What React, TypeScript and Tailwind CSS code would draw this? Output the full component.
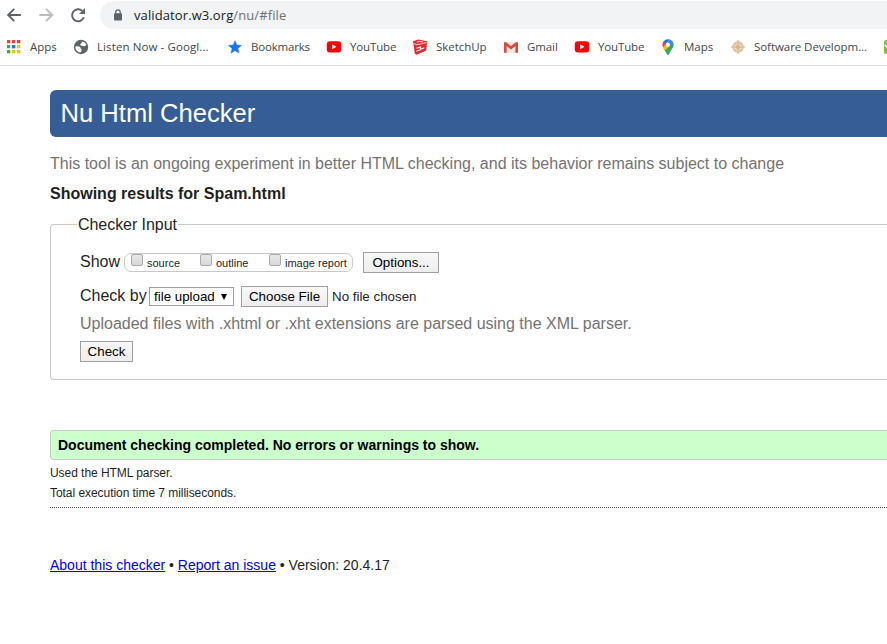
import type { ReactNode } from 'react';

const sans = "font-['Liberation_Sans',Arial,sans-serif]";
const ui = "font-['Open_Sans','Noto_Sans',sans-serif]";

function Icon({ children }: { children: ReactNode }) {
  return <svg viewBox="0 0 16 16" className="h-4 w-4 shrink-0">{children}</svg>;
}

const youtube = (
  <Icon>
    <rect x="0.8" y="2.2" width="14.4" height="11.2" rx="3" fill="#f00" />
    <path d="M6.2 5.3v5l4.2-2.5z" fill="#fff" />
  </Icon>
);

const apps = (
  <Icon>
    {['#ea4335', '#ea4335', '#ea4335', '#34a853', '#1a73e8', '#fbbc04', '#34a853', '#fbbc04', '#fbbc04'].map((c, i) => (
      <rect key={i} x={1 + (i % 3) * 5} y={1 + Math.floor(i / 3) * 5} width="3.3" height="3.3" fill={c} />
    ))}
  </Icon>
);

const globe = (
  <Icon>
    <circle cx="8" cy="8" r="7.2" fill="#5f6368" />
    <path d="M2.3 7.6c1.9-.4 3.8-.3 4.7.5.7.7.3 1.4 1.3 1.8 1.1.3.2 2-.9 3.7-2.8-.3-5.2-2.7-5.1-6zM8.6 2.4c2.2.2 3.9 1.4 4.8 3.3-.8.8-1.3 1.7-2.5 1.5-.9-.2-1.2-.6-2.1-.5-1.5.1-2.2-.9-1.2-1.9.9-.7 1.6-.9 1-2.4z" fill="#fff" />
  </Icon>
);

const star = (
  <Icon>
    <path d="M8 1.7l1.8 4.3 4.7.4-3.6 3.1 1.1 4.6L8 11.6l-4 2.5 1.1-4.6-3.6-3.1L6.2 6z" fill="#1a73e8" stroke="#1a73e8" strokeWidth=".5" />
  </Icon>
);

const sketchup = (
  <Icon>
    <path d="M.8 2.2L6.5.4l8.7 1.8-1 9.2-9.6 4.4-1.9-1.2-.8-7z" fill="#e22b2e" />
    <path d="M1.4 4.4l3.5 1.4 9.6-2.2" fill="none" stroke="#fff" strokeWidth=".8" />
    <path d="M4.8 3.1l3-.8 3.4.7" fill="none" stroke="#fff" strokeWidth=".8" />
    <path d="M4.5 9.2l4-1.3v2.3l3.8-1.4M4.3 12.2l4.5-1.8" fill="none" stroke="#fff" strokeWidth="1.1" />
  </Icon>
);

const gmail = (
  <Icon>
    <path d="M1.5 3h13v10.8h-13z" fill="#e9e5e3" />
    <path d="M1 3.2h2.2L8 7.1l4.8-3.9H15v10.6h-2.6V7L8 10.5 3.6 7v6.8H1z" fill="#d54b3d" />
  </Icon>
);

const maps = (
  <Icon>
    <path d="M3.5 2.5A5.8 5.8 0 0 1 9.8.5L4.1 7.1z" fill="#1a73e8" />
    <path d="M9.6.4c2.5.8 4 2.7 4 5.1L6 13.2 3.8 9.7z" fill="#4285f4" />
    <path d="M3.5 2.5l3 2.3L3.2 8.5C1.9 6.5 2.2 4 3.5 2.5z" fill="#ea4335" />
    <path d="M6.5 7.2l-3.2 1.5 1.9 3C6.3 13 6.7 16 8 16s1.5-2.6 2.7-4.3c1.6-2.2 3-3.6 2.8-7L9.7 7.5z" fill="#34a853" />
    <path d="M3 8.3l3.5-3.7 2.6 2.8-4.3 4.1z" fill="#fbbc04" />
    <circle cx="7.9" cy="5.8" r="2.1" fill="#fff" />
  </Icon>
);

const wheel = (
  <Icon>
    <circle cx="8" cy="8" r="4.6" fill="none" stroke="#e2c5a0" strokeWidth="2.2" />
    <path d="M8 1.2v13.6M1.2 8h13.6" stroke="#dfc3a1" strokeWidth="2.2" />
    <path d="M3.8 3.8l8.4 8.4M12.2 3.8l-8.4 8.4" stroke="#dfc3a1" strokeWidth="1.3" />
    <circle cx="8" cy="8" r="1.8" fill="#d7b58b" />
  </Icon>
);

const bookmarks: { icon: ReactNode; label: string; cls: string }[] = [
  { icon: apps, label: 'Apps', cls: 'w-[67px]' },
  { icon: globe, label: 'Listen Now - Googl...', cls: 'w-[154px] tracking-[0.1px]' },
  { icon: star, label: 'Bookmarks', cls: 'w-[99px] tracking-[-0.2px]' },
  { icon: youtube, label: 'YouTube', cls: 'w-[86px] tracking-[-0.15px]' },
  { icon: sketchup, label: 'SketchUp', cls: 'w-[91px] tracking-[-0.05px]' },
  { icon: gmail, label: 'Gmail', cls: 'w-[71px] tracking-[-0.1px]' },
  { icon: youtube, label: 'YouTube', cls: 'w-[86px] tracking-[-0.15px]' },
  { icon: maps, label: 'Maps', cls: 'w-[70px]' },
  { icon: wheel, label: 'Software Developm...', cls: 'w-[153px] tracking-[-0.06px]' },
];

function Button({ children, className }: { children: ReactNode; className: string }) {
  return (
    <button className={`h-[21px] shrink-0 whitespace-nowrap border border-[#a0a0a0] bg-gradient-to-b from-[#f8f8f8] to-[#eeeeee] text-center text-[13.33px] leading-[19px] text-black ${className}`}>
      {children}
    </button>
  );
}

function Check({ label, className }: { label: string; className: string }) {
  return (
    <label className={`flex shrink-0 ${className}`}>
      <span className="mr-1 h-3 w-3 shrink-0 rounded-[2px] border border-[#aaa] bg-gradient-to-b from-[#e8e8e8] to-[#d8d8d8]" />
      <span className="whitespace-nowrap pt-[3px] text-[11px] leading-[13px]">{label}</span>
    </label>
  );
}

export default function App() {
  return (
    <div className={`h-[644px] w-[887px] overflow-hidden bg-white text-[#1f1f1f] ${sans}`}>
      <header className={`h-[66px] border-b border-[#dadce0] ${ui}`}>
        <div className="flex h-[30px] items-center">
          <svg viewBox="0 0 100 30" className="h-[30px] w-[100px] shrink-0" fill="none" strokeWidth="1.9">
            <path d="M20.8 15H8.3M14.3 8.8L8.1 15l6.2 6.2" stroke="#5f6368" />
            <path d="M39.3 15h12.5M46 8.8l6.2 6.2-6.2 6.2" stroke="#babcbe" />
            <path d="M83.8 17.2A6 6 0 1 1 82.2 10.8" stroke="#5f6368" />
            <path d="M85 8v6h-6z" fill="#5f6368" />
          </svg>
          <div className="flex h-7 flex-1 items-center rounded-l-full bg-[#f1f3f4] pl-[13px]">
            <svg viewBox="0 0 10 12" className="mr-[11px] h-3 w-[10px]">
              <rect x="1" y="4.2" width="8" height="7.2" rx="1" fill="#5f6368" />
              <path d="M2.8 5V3a2.2 2.2 0 0 1 4.4 0v2" fill="none" stroke="#5f6368" strokeWidth="1.2" />
            </svg>
            <span className="whitespace-nowrap text-[13px] leading-5 tracking-[0.1px] text-[#202124]">validator.w3.org<span className="text-[#6c7075]">/nu/#file</span></span>
          </div>
        </div>
        <nav className="flex h-[34px] items-center overflow-hidden pl-[6px]">
          {bookmarks.map((b, i) => (
            <div key={i} className={`flex shrink-0 items-center gap-2 ${b.cls}`}>
              {b.icon}
              <span className="whitespace-nowrap text-[11.5px] leading-4 text-[#44474a]">{b.label}</span>
            </div>
          ))}
          <div className="ml-px h-[14px] w-4 shrink-0 rounded-[2px] bg-[#7dc242]">
            <svg viewBox="0 0 16 14" className="h-[14px] w-4"><path d="M1 5l3 3 6-6" fill="none" stroke="#fff" strokeWidth="1.6" /></svg>
          </div>
        </nav>
      </header>
      <main className="pl-[50px] pt-6">
        <h1 className="h-[47px] rounded-l-[6px] bg-[#365d95] pl-[10.5px] text-[25.6px] leading-[46px] text-white">Nu Html Checker</h1>
        <p className="mt-[17px] h-5 whitespace-nowrap text-base leading-5 text-[#737373]">This tool is an ongoing experiment in better HTML checking, and its behavior remains subject to change</p>
        <h2 className="mt-[10px] h-5 text-base font-bold leading-5">Showing results for Spam.html</h2>
        <fieldset className="mt-[11px] h-[165px] rounded-l-[4px] border border-r-0 border-[#c8c8c8] pl-[29px]">
          <legend className="-ml-[3px] h-[18px] px-px text-base leading-5 tracking-[-0.05px]">Checker Input</legend>
          <div className="mt-[19px] flex h-[21px] items-center">
            <span className="w-11 pb-[2px] text-base leading-5">Show</span>
            <div className="flex h-[19px] w-[229px] items-start rounded-[7px] border border-[#c8c8c8] pl-[6px]">
              <Check label="source" className="w-[69px]" />
              <Check label="outline" className="w-[69px]" />
              <Check label="image report" className="w-[84px]" />
            </div>
            <Button className="ml-[10px] w-[76px]">Options...</Button>
          </div>
          <div className="mt-[13px] flex h-[21px] items-center">
            <span className="w-[69px] whitespace-nowrap pb-[2px] text-base leading-5">Check by</span>
            <div className="flex h-[19px] w-[85px] items-center border border-[#a0a0a0] pl-1 text-[13.33px] leading-4 text-black">
              <span className="whitespace-nowrap">file upload</span>
              <svg viewBox="0 0 6 6" className="ml-[6px] h-[6px] w-[6px]"><path d="M0 0h6L3 6z" /></svg>
            </div>
            <Button className="ml-[7px] w-[87px]">Choose File</Button>
            <span className="ml-1 whitespace-nowrap text-[13.33px] leading-4">No file chosen</span>
          </div>
          <p className="mt-[7px] h-5 whitespace-nowrap text-base leading-5 text-[#737373]">Uploaded files with .xhtml or .xht extensions are parsed using the XML parser.</p>
          <Button className="mt-[7px] block w-[53px]">Check</Button>
        </fieldset>
        <p className="mt-[50px] h-[30px] rounded-l-[4px] border border-r-0 border-[#c3cfc3] bg-[#ccffcc] pl-[7px] text-[14px] font-bold leading-7 text-black">Document checking completed. No errors or warnings to show.</p>
        <p className="mt-[3px] text-xs leading-5 tracking-[-0.05px]">Used the HTML parser.</p>
        <p className="text-xs leading-5 tracking-[-0.05px]">Total execution time 7 milliseconds.</p>
        <div className="mt-1 border-t border-dotted border-[#555]" />
        <footer className="mt-[47px] whitespace-nowrap text-[14px] leading-5">
          <a className="text-[#0000ee] underline">About this checker</a> • <a className="text-[#0000ee] underline">Report an issue</a> • Version: 20.4.17
        </footer>
      </main>
    </div>
  );
}
